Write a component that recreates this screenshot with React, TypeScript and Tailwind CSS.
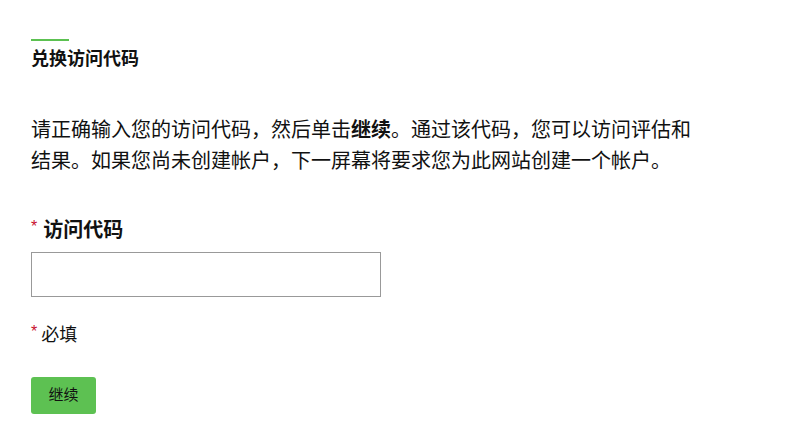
export default function App() {
  return (
    <div
      className="w-[792px] h-[448px] bg-white text-[#111] pl-[31px] pt-[39px]"
      style={{ fontFamily: '"Liberation Sans", "Noto Sans CJK SC", sans-serif' }}
    >
      <div className="w-[38px] h-[2px] bg-[#5cc151]" />
      <h1 className="mt-[6px] text-[18px] leading-[24px] font-bold">兑换访问代码</h1>

      <p className="mt-[44px] text-[20px] leading-[31px] w-[665px]">
        请正确输入您的访问代码，然后单击<b className="font-bold">继续</b>。通过该代码，您可以访问评估和结果。如果您尚未创建帐户，下一屏幕将要求您为此网站创建一个帐户。
      </p>

      <label className="mt-[39px] flex items-center gap-[6px]">
        <span className="text-[#c8102e] text-[16px] leading-none -mt-[6px]">*</span>
        <span className="text-[20px] leading-[28px] font-bold">访问代码</span>
      </label>
      <input
        type="text"
        className="mt-[8px] block w-[350px] h-[45px] border border-[#999] outline-none px-2"
      />

      <div className="mt-[26px] flex items-center gap-[4px]">
        <span className="text-[#c8102e] text-[16px] leading-none -mt-[6px]">*</span>
        <span className="text-[18px] leading-[24px]">必填</span>
      </div>

      <button className="mt-[30px] w-[65px] h-[37px] bg-[#5dc152] rounded-[3px] text-[15px] text-[#111]">
        继续
      </button>
    </div>
  );
}
